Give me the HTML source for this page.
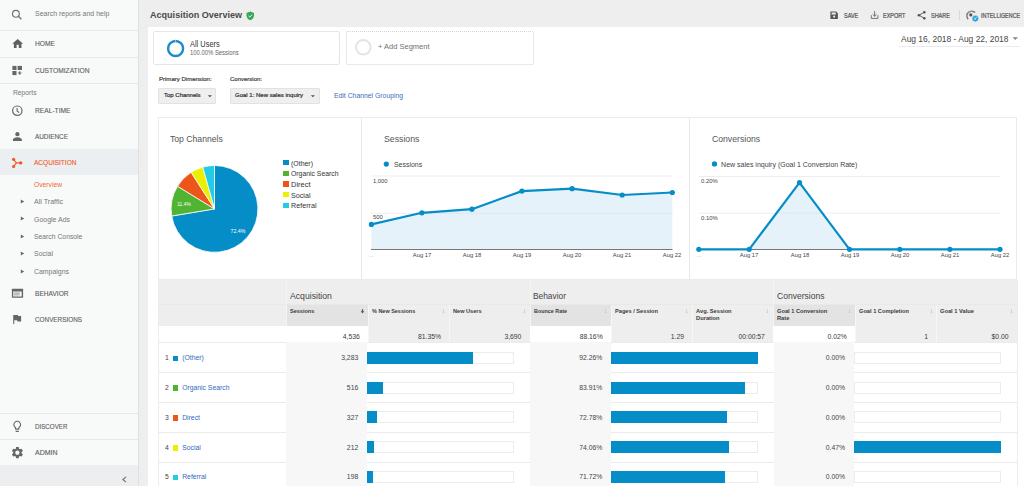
<!DOCTYPE html>
<html><head><meta charset="utf-8"><style>
html,body{margin:0;padding:0;width:1024px;height:486px;overflow:hidden;background:#fff}
body{position:relative;font-family:"Liberation Sans", sans-serif}
.t{position:absolute;white-space:nowrap;line-height:1}
.r{position:absolute}
.i{position:absolute;overflow:visible}
</style></head><body>
<div class="r" style="left:0px;top:0px;width:138px;height:486px;background:#f8f9f9;"></div>
<div class="r" style="left:138px;top:0px;width:1px;height:486px;background:#e0e0e0;"></div>
<div class="r" style="left:0px;top:30px;width:138px;height:1px;background:#e6e8ea;"></div>
<div class="r" style="left:0px;top:56.5px;width:138px;height:1px;background:#e6e8ea;"></div>
<div class="r" style="left:0px;top:83px;width:138px;height:1px;background:#e6e8ea;"></div>
<div class="r" style="left:0px;top:412.5px;width:138px;height:1px;background:#e6e8ea;"></div>
<div class="r" style="left:0px;top:438.5px;width:138px;height:1px;background:#e6e8ea;"></div>
<div class="r" style="left:0px;top:149.2px;width:138px;height:25.8px;background:#eceff1;"></div>
<div class="r" style="left:0px;top:464.5px;width:138px;height:22px;background:#eceeef;"></div>
<div id="t0" class="t" style="left:35.40px;top:10.00px;font-size:7px;color:#777;font-weight:normal;transform:scaleX(0.9944);transform-origin:left 50%;">Search reports and help</div>
<div id="t1" class="t" style="left:34.60px;top:40.00px;font-size:7px;color:#606060;font-weight:normal;transform:scaleX(0.9524);transform-origin:left 50%;-webkit-text-stroke:0.12px currentColor;">HOME</div>
<div id="t2" class="t" style="left:34.60px;top:67.00px;font-size:7px;color:#606060;font-weight:normal;transform:scaleX(0.9512);transform-origin:left 50%;-webkit-text-stroke:0.12px currentColor;">CUSTOMIZATION</div>
<div id="t3" class="t" style="left:13.20px;top:89.00px;font-size:7px;color:#777;font-weight:normal;transform:scaleX(0.9586);transform-origin:left 50%;">Reports</div>
<div id="t4" class="t" style="left:34.60px;top:107.00px;font-size:7px;color:#606060;font-weight:normal;transform:scaleX(0.9506);transform-origin:left 50%;-webkit-text-stroke:0.12px currentColor;">REAL-TIME</div>
<div id="t5" class="t" style="left:34.60px;top:133.00px;font-size:7px;color:#606060;font-weight:normal;transform:scaleX(0.9119);transform-origin:left 50%;-webkit-text-stroke:0.12px currentColor;">AUDIENCE</div>
<div id="t6" class="t" style="left:34.40px;top:159.00px;font-size:7px;color:#ee5a24;font-weight:normal;transform:scaleX(0.9337);transform-origin:left 50%;-webkit-text-stroke:0.12px currentColor;">ACQUISITION</div>
<div id="t7" class="t" style="left:34.20px;top:181.00px;font-size:7px;color:#ef6a2e;font-weight:normal;transform:scaleX(0.9593);transform-origin:left 50%;">Overview</div>
<div id="t8" class="t" style="left:34.00px;top:198.00px;font-size:7px;color:#777;font-weight:normal;transform:scaleX(1.0120);transform-origin:left 50%;">All Traffic</div>
<svg class="i" style="left:20px;top:198.90px" width="5" height="5" viewBox="0 0 5 5"><path d="M0.8 0.6 L4.2 2.5 L0.8 4.4Z" fill="#666"/></svg>
<div id="t9" class="t" style="left:34.00px;top:216.00px;font-size:7px;color:#777;font-weight:normal;transform:scaleX(0.9944);transform-origin:left 50%;">Google Ads</div>
<svg class="i" style="left:20px;top:216.40px" width="5" height="5" viewBox="0 0 5 5"><path d="M0.8 0.6 L4.2 2.5 L0.8 4.4Z" fill="#666"/></svg>
<div id="t10" class="t" style="left:34.00px;top:233.00px;font-size:7px;color:#777;font-weight:normal;transform:scaleX(0.9716);transform-origin:left 50%;">Search Console</div>
<svg class="i" style="left:20px;top:233.90px" width="5" height="5" viewBox="0 0 5 5"><path d="M0.8 0.6 L4.2 2.5 L0.8 4.4Z" fill="#666"/></svg>
<div id="t11" class="t" style="left:34.00px;top:250.00px;font-size:7px;color:#777;font-weight:normal;transform:scaleX(0.9959);transform-origin:left 50%;">Social</div>
<svg class="i" style="left:20px;top:250.80px" width="5" height="5" viewBox="0 0 5 5"><path d="M0.8 0.6 L4.2 2.5 L0.8 4.4Z" fill="#666"/></svg>
<div id="t12" class="t" style="left:34.00px;top:268.00px;font-size:7px;color:#777;font-weight:normal;transform:scaleX(0.9881);transform-origin:left 50%;">Campaigns</div>
<svg class="i" style="left:20px;top:268.50px" width="5" height="5" viewBox="0 0 5 5"><path d="M0.8 0.6 L4.2 2.5 L0.8 4.4Z" fill="#666"/></svg>
<div id="t13" class="t" style="left:34.90px;top:290.00px;font-size:7px;color:#606060;font-weight:normal;transform:scaleX(0.9395);transform-origin:left 50%;-webkit-text-stroke:0.12px currentColor;">BEHAVIOR</div>
<div id="t14" class="t" style="left:34.90px;top:316.00px;font-size:7px;color:#606060;font-weight:normal;transform:scaleX(0.9085);transform-origin:left 50%;-webkit-text-stroke:0.12px currentColor;">CONVERSIONS</div>
<div id="t15" class="t" style="left:34.90px;top:423.00px;font-size:7px;color:#606060;font-weight:normal;transform:scaleX(0.8889);transform-origin:left 50%;-webkit-text-stroke:0.12px currentColor;">DISCOVER</div>
<div id="t16" class="t" style="left:34.90px;top:449.00px;font-size:7px;color:#606060;font-weight:normal;transform:scaleX(0.9972);transform-origin:left 50%;-webkit-text-stroke:0.12px currentColor;">ADMIN</div>
<svg class="i" style="left:0;top:0" width="138" height="486" viewBox="0 0 138 486"><circle cx="15.9" cy="13.8" r="3.4" fill="none" stroke="#707070" stroke-width="1.15"/><path d="M18.4 16.3 L21.4 19.2" stroke="#707070" stroke-width="1.3"/><g transform="translate(11.2 37.3) scale(0.54)"><path d="M10 20v-6h4v6h5v-8h3L12 3 2 12h3v8z" fill="#5f5f5f"/></g><rect x="12.4" y="65.9" width="4.1" height="4.1" fill="#666"/><rect x="17.6" y="65.9" width="4.4" height="4.1" fill="#666"/><rect x="12.4" y="71" width="4.1" height="4.1" fill="#666"/><path d="M19.7 71.2v3.6M17.9 73h3.6" stroke="#666" stroke-width="1.1"/><circle cx="17.3" cy="110.7" r="4.7" fill="none" stroke="#666" stroke-width="1.2"/><path d="M17.1 107.9v3.1l2.1 1.6" fill="none" stroke="#666" stroke-width="1.1"/><circle cx="17.4" cy="134.2" r="2.1" fill="#666"/><path d="M12.9 141.1v-1.3c0-1.6 3-2.5 4.5-2.5s4.5 0.9 4.5 2.5v1.3z" fill="#666"/><g fill="#ee5a24" stroke="#ee5a24"><circle cx="13.6" cy="159.3" r="1.6" stroke="none"/><circle cx="13.6" cy="166.5" r="1.6" stroke="none"/><circle cx="20.7" cy="162.9" r="1.7" stroke="none"/><path d="M13.6 159.3 L16.4 162.9 L13.6 166.5 M16.4 162.9 H20.7" fill="none" stroke-width="1.2"/></g><rect x="11.9" y="288.7" width="11.2" height="9.1" rx="0.6" fill="#666"/><rect x="13.1" y="291.5" width="8.6" height="5" fill="#f4f4f4"/><rect x="13.5" y="292.3" width="6.2" height="3.2" fill="#bdbdbd"/><g transform="translate(10.55 312.9) scale(0.53)"><path d="M14.4 6L14 4H5v17h2v-7h5.6l.4 2h7V6z" fill="#666"/></g><g transform="translate(10.5 419.6) scale(0.56)"><path d="M9 21c0 .55.45 1 1 1h4c.55 0 1-.45 1-1v-1H9v1zm3-19C8.14 2 5 5.14 5 9c0 2.38 1.19 4.47 3 5.74V17c0 .55.45 1 1 1h6c.55 0 1-.45 1-1v-2.26c1.81-1.27 3-3.36 3-5.74 0-3.86-3.14-7-7-7zm2.85 11.1l-.85.6V16h-4v-2.3l-.85-.6C7.8 12.16 7 10.63 7 9c0-2.76 2.24-5 5-5s5 2.24 5 5c0 1.63-.8 3.16-2.15 4.1z" fill="#666"/></g><g transform="translate(10.44 445.7) scale(0.58)"><path d="M19.14 12.94c.04-.3.06-.61.06-.94 0-.32-.02-.64-.07-.94l2.03-1.58c.18-.14.23-.41.12-.61l-1.92-3.32c-.12-.22-.37-.29-.59-.22l-2.39.96c-.5-.38-1.03-.7-1.62-.94l-.36-2.54c-.04-.24-.24-.41-.48-.41h-3.84c-.24 0-.43.17-.47.41l-.36 2.54c-.59.24-1.13.57-1.62.94l-2.39-.96c-.22-.08-.47 0-.59.22L2.74 8.87c-.12.21-.08.47.12.61l2.03 1.58c-.05.3-.09.63-.09.94s.02.64.07.94l-2.03 1.58c-.18.14-.23.41-.12.61l1.92 3.32c.12.22.37.29.59.22l2.39-.96c.5.38 1.03.7 1.62.94l.36 2.54c.05.24.24.41.48.41h3.84c.24 0 .44-.17.47-.41l.36-2.54c.59-.24 1.13-.56 1.62-.94l2.39.96c.22.08.47 0 .59-.22l1.92-3.32c.12-.22.07-.47-.12-.61l-2.01-1.58zM12 15.6c-1.98 0-3.6-1.62-3.6-3.6s1.62-3.6 3.6-3.6 3.6 1.62 3.6 3.6-1.62 3.6-3.6 3.6z" fill="#666"/></g><path d="M126 476.8 L122.9 479.5 L126 482.2" fill="none" stroke="#707070" stroke-width="1.1"/></svg>
<div class="r" style="left:139px;top:0px;width:885px;height:486px;background:#eeeeee;"></div>
<div class="r" style="left:148px;top:26.5px;width:876px;height:460px;background:#ffffff;"></div>
<div id="t17" class="t" style="left:149.80px;top:10.00px;font-size:9.7px;color:#4a4a4a;font-weight:bold;transform:scaleX(0.9337);transform-origin:left 50%;">Acquisition Overview</div>
<svg class="i" style="left:246px;top:10.5px" width="8.5" height="9.5" viewBox="0 0 8.5 9.5"><path d="M4.25 0.4 L8 1.9 V4.6 C8 6.9 6.4 8.6 4.25 9.2 C2.1 8.6 0.5 6.9 0.5 4.6 V1.9Z" fill="#34a853"/><path d="M2.5 4.9 L3.8 6.1 L6.1 3.6" fill="none" stroke="#fff" stroke-width="0.9"/></svg>
<div id="t18" class="t" style="left:843.90px;top:13.00px;font-size:6.4px;color:#555;font-weight:normal;transform:scaleX(0.8626);transform-origin:left 50%;-webkit-text-stroke:0.22px currentColor;">SAVE</div>
<div id="t19" class="t" style="left:883.30px;top:13.00px;font-size:6.4px;color:#555;font-weight:normal;transform:scaleX(0.8559);transform-origin:left 50%;-webkit-text-stroke:0.22px currentColor;">EXPORT</div>
<div id="t20" class="t" style="left:931.00px;top:13.00px;font-size:6.4px;color:#555;font-weight:normal;transform:scaleX(0.8579);transform-origin:left 50%;-webkit-text-stroke:0.22px currentColor;">SHARE</div>
<div id="t21" class="t" style="left:981.00px;top:13.00px;font-size:6.4px;color:#555;font-weight:normal;transform:scaleX(0.8490);transform-origin:left 50%;-webkit-text-stroke:0.22px currentColor;">INTELLIGENCE</div>
<div class="r" style="left:959px;top:10px;width:1px;height:10px;background:#d8d8d8;"></div>
<svg class="i" style="left:820px;top:0" width="204" height="27" viewBox="820 0 204 27"><path d="M830.4 11.6h5.8l1.7 1.7v5.6h-7.5z" fill="#555"/><rect x="831.6" y="12.5" width="4.2" height="2" fill="#eee"/><circle cx="834.1" cy="16.6" r="1.1" fill="#eee"/><path d="M871.3 15.2v3.2h6.6v-3.2" fill="none" stroke="#666" stroke-width="0.9"/><path d="M874.6 11.2v5M872.7 14.3l1.9 1.9 1.9-1.9" fill="none" stroke="#666" stroke-width="0.9"/><circle cx="924.3" cy="12.3" r="1.3" fill="#555"/><circle cx="918.9" cy="15.2" r="1.3" fill="#555"/><circle cx="924.3" cy="18.2" r="1.3" fill="#555"/><path d="M924.3 12.3L918.9 15.2L924.3 18.2" fill="none" stroke="#555" stroke-width="0.9"/><path d="M975.2 12.6 A4.6 4.6 0 1 0 968.2 19.2" fill="none" stroke="#777" stroke-width="1.4"/><path d="M966.4 15.2 A4.6 3 0 0 1 974 12.4" fill="none" stroke="#999" stroke-width="0.8"/><circle cx="970.8" cy="14.9" r="1.6" fill="#555"/><circle cx="975.3" cy="18.6" r="3.3" fill="#2aa0dc" stroke="#eee" stroke-width="0.6"/><path d="M973.9 17.5 l1.1 1.2 v1.4 M976.8 17.4 l-1.8 1.3" fill="none" stroke="#fff" stroke-width="0.7"/></svg>
<div class="r" style="left:153.3px;top:31.4px;width:187px;height:33.3px;background:#fff;border:1px solid #e6e6e6;border-radius:2px;box-sizing:border-box"></div>
<svg class="i" style="left:164px;top:36.5px" width="23" height="23" viewBox="0 0 23 23"><circle cx="11.6" cy="11.5" r="7.5" fill="none" stroke="#1a8ccc" stroke-width="2.4"/><path d="M11.6 2.8V5.2" stroke="#fff" stroke-width="0.5"/></svg>
<div id="t22" class="t" style="left:190.00px;top:40.00px;font-size:8.8px;color:#333;font-weight:normal;transform:scaleX(0.8437);transform-origin:left 50%;">All Users</div>
<div id="t23" class="t" style="left:190.30px;top:50.00px;font-size:6.6px;color:#666;font-weight:normal;transform:scaleX(0.8934);transform-origin:left 50%;">100.00% Sessions</div>
<div class="r" style="left:346.1px;top:31.4px;width:187.6px;height:33.3px;background:#fff;border:1px dotted #d4d4d4;border-radius:2px;box-sizing:border-box"></div>
<svg class="i" style="left:352px;top:36.3px" width="23" height="23" viewBox="0 0 23 23"><circle cx="11.3" cy="11.3" r="7.3" fill="none" stroke="#e3e3e3" stroke-width="2"/></svg>
<div id="t24" class="t" style="left:377.70px;top:43.00px;font-size:8px;color:#707070;font-weight:normal;transform:scaleX(0.9374);transform-origin:left 50%;">+ Add Segment</div>
<div id="t25" class="t" style="left:900.70px;top:34.00px;font-size:9.9px;color:#444;font-weight:normal;transform:scaleX(0.8549);transform-origin:left 50%;">Aug 16, 2018 - Aug 22, 2018</div>
<svg class="i" style="left:1011px;top:36px" width="9" height="6" viewBox="0 0 9 6"><path d="M1.5 1.2h5.5L4.25 4z" fill="#888"/></svg>
<div class="r" style="left:899.3px;top:46px;width:121px;height:1px;background:#ebebeb;"></div>
<div id="t26" class="t" style="left:158.90px;top:76.00px;font-size:6.2px;color:#444;font-weight:normal;transform:scaleX(0.9744);transform-origin:left 50%;-webkit-text-stroke:0.22px currentColor;">Primary Dimension:</div>
<div id="t27" class="t" style="left:230.20px;top:76.00px;font-size:6.2px;color:#444;font-weight:normal;transform:scaleX(0.9688);transform-origin:left 50%;-webkit-text-stroke:0.22px currentColor;">Conversion:</div>
<div class="r" style="left:158.3px;top:87.9px;width:58px;height:16px;background:#efefef;border:1px solid #e2e2e2;box-sizing:border-box;border-radius:1px"></div>
<div id="t28" class="t" style="left:163.60px;top:92.00px;font-size:6.2px;color:#333;font-weight:normal;transform:scaleX(0.9671);transform-origin:left 50%;-webkit-text-stroke:0.22px currentColor;">Top Channels</div>
<svg class="i" style="left:206.7px;top:93.8px" width="6" height="5" viewBox="0 0 6 5"><path d="M0.8 1.3h4.2L2.9 3.3z" fill="#555"/></svg>
<div class="r" style="left:230.2px;top:87.9px;width:89.4px;height:16px;background:#efefef;border:1px solid #e2e2e2;box-sizing:border-box;border-radius:1px"></div>
<div id="t29" class="t" style="left:235.20px;top:92.00px;font-size:6.2px;color:#333;font-weight:normal;transform:scaleX(0.9707);transform-origin:left 50%;-webkit-text-stroke:0.22px currentColor;">Goal 1: New sales inquiry</div>
<svg class="i" style="left:310.4px;top:93.8px" width="6" height="5" viewBox="0 0 6 5"><path d="M0.8 1.3h4.2L2.9 3.3z" fill="#555"/></svg>
<div id="t30" class="t" style="left:333.80px;top:92.00px;font-size:7px;color:#3a6fb8;font-weight:normal;transform:scaleX(0.9756);transform-origin:left 50%;">Edit Channel Grouping</div>
<div class="r" style="left:158.2px;top:117px;width:859px;height:163px;background:#fff;border:1px solid #ebebeb;box-sizing:border-box"></div>
<div class="r" style="left:361px;top:117px;width:1px;height:163px;background:#e9e9e9;"></div>
<div class="r" style="left:688.8px;top:117px;width:1px;height:163px;background:#e9e9e9;"></div>
<div id="t31" class="t" style="left:170.30px;top:134.00px;font-size:9.5px;color:#555;font-weight:normal;transform:scaleX(0.9086);transform-origin:left 50%;">Top Channels</div>
<div id="t32" class="t" style="left:383.70px;top:134.00px;font-size:9.5px;color:#555;font-weight:normal;transform:scaleX(0.9180);transform-origin:left 50%;">Sessions</div>
<div id="t33" class="t" style="left:711.60px;top:134.00px;font-size:9.5px;color:#555;font-weight:normal;transform:scaleX(0.9108);transform-origin:left 50%;">Conversions</div>
<svg class="i" style="left:0;top:0" width="1024" height="486" viewBox="0 0 1024 486"><path d="M214.5 208.9 L214.50 165.50 A43.4 43.4 0 1 1 171.69 216.02 Z" fill="#058dc7" stroke="#fff" stroke-width="0.8" stroke-linejoin="round"/><path d="M214.5 208.9 L171.69 216.02 A43.4 43.4 0 0 1 177.50 186.22 Z" fill="#50b432" stroke="#fff" stroke-width="0.8" stroke-linejoin="round"/><path d="M214.5 208.9 L177.50 186.22 A43.4 43.4 0 0 1 191.16 172.31 Z" fill="#ed561b" stroke="#fff" stroke-width="0.8" stroke-linejoin="round"/><path d="M214.5 208.9 L191.16 172.31 A43.4 43.4 0 0 1 202.75 167.12 Z" fill="#edef00" stroke="#fff" stroke-width="0.8" stroke-linejoin="round"/><path d="M214.5 208.9 L202.75 167.12 A43.4 43.4 0 0 1 214.50 165.50 Z" fill="#24cbe5" stroke="#fff" stroke-width="0.8" stroke-linejoin="round"/></svg>
<div id="t34" class="t" style="left:-62.00px;width:600px;text-align:center;top:229.00px;font-size:5.5px;color:#fff;font-weight:normal;transform:scaleX(0.9610);transform-origin:center 50%;">72.4%</div>
<div id="t35" class="t" style="left:-116.40px;width:600px;text-align:center;top:202.00px;font-size:5.5px;color:#fff;font-weight:normal;transform:scaleX(0.8889);transform-origin:center 50%;">11.4%</div>
<div class="r" style="left:283px;top:160.0px;width:5.7px;height:5.2px;background:#058dc7;"></div>
<div id="t36" class="t" style="left:291.40px;top:160.00px;font-size:7px;color:#333;font-weight:normal;transform:scaleX(0.9922);transform-origin:left 50%;">(Other)</div>
<div class="r" style="left:283px;top:170.7px;width:5.7px;height:5.2px;background:#50b432;"></div>
<div id="t37" class="t" style="left:291.40px;top:170.00px;font-size:7px;color:#333;font-weight:normal;transform:scaleX(0.9765);transform-origin:left 50%;">Organic Search</div>
<div class="r" style="left:283px;top:181.4px;width:5.7px;height:5.2px;background:#ed561b;"></div>
<div id="t38" class="t" style="left:291.40px;top:181.00px;font-size:7px;color:#333;font-weight:normal;transform:scaleX(1.0667);transform-origin:left 50%;">Direct</div>
<div class="r" style="left:283px;top:192.1px;width:5.7px;height:5.2px;background:#edef00;"></div>
<div id="t39" class="t" style="left:291.40px;top:192.00px;font-size:7px;color:#333;font-weight:normal;transform:scaleX(1.0221);transform-origin:left 50%;">Social</div>
<div class="r" style="left:283px;top:202.8px;width:5.7px;height:5.2px;background:#24cbe5;"></div>
<div id="t40" class="t" style="left:291.40px;top:202.00px;font-size:7px;color:#333;font-weight:normal;transform:scaleX(1.0238);transform-origin:left 50%;">Referral</div>
<svg class="i" style="left:0;top:0" width="1024" height="486" viewBox="0 0 1024 486"><path d="M371 176H672.5" stroke="#eeeeee" stroke-width="1"/><defs><clipPath id="clip371"><path d="M371.4 249 L371.4 224.4 L421.9 212.8 L471.9 209.2 L521.9 191.1 L572.1 188.7 L622.2 195 L672.3 192.5 L672.3 249Z"/></clipPath></defs><path d="M371 213.3H672.5" stroke="#eeeeee" stroke-width="1"/><path d="M371.4 249 L371.4 224.4 L421.9 212.8 L471.9 209.2 L521.9 191.1 L572.1 188.7 L622.2 195 L672.3 192.5 L672.3 249Z" fill="#e6f2fa"/><path d="M371 213.3H672.5" stroke="#cfcfcf" stroke-width="0.8" stroke-dasharray="1 1.5" clip-path="url(#clip371)"/><path d="M371 249.5H672.5" stroke="#777" stroke-width="1"/><path d="M371.4 224.4 L421.9 212.8 L471.9 209.2 L521.9 191.1 L572.1 188.7 L622.2 195 L672.3 192.5" fill="none" stroke="#058dc7" stroke-width="2.2" stroke-linejoin="round"/><circle cx="371.4" cy="224.4" r="2.6" fill="#058dc7"/><circle cx="421.9" cy="212.8" r="2.6" fill="#058dc7"/><circle cx="471.9" cy="209.2" r="2.6" fill="#058dc7"/><circle cx="521.9" cy="191.1" r="2.6" fill="#058dc7"/><circle cx="572.1" cy="188.7" r="2.6" fill="#058dc7"/><circle cx="622.2" cy="195" r="2.6" fill="#058dc7"/><circle cx="672.3" cy="192.5" r="2.6" fill="#058dc7"/></svg>
<svg class="i" style="left:383px;top:161px" width="6" height="6" viewBox="0 0 6 6"><circle cx="3.3" cy="3.1" r="2.6" fill="#058dc7"/></svg>
<div id="t41" class="t" style="left:394.00px;top:161.00px;font-size:7px;color:#444;font-weight:normal;transform:scaleX(0.9892);transform-origin:left 50%;">Sessions</div>
<div id="t42" class="t" style="left:373.40px;top:179.00px;font-size:5.8px;color:#444;font-weight:normal;transform:scaleX(0.9920);transform-origin:left 50%;">1,000</div>
<div id="t43" class="t" style="left:372.80px;top:215.00px;font-size:5.8px;color:#444;font-weight:normal;transform:scaleX(1.0132);transform-origin:left 50%;">500</div>
<div id="t44" class="t" style="left:121.90px;width:600px;text-align:center;top:253.00px;font-size:5.8px;color:#444;font-weight:normal;transform:scaleX(1.0068);transform-origin:center 50%;">Aug 17</div>
<div id="t45" class="t" style="left:171.90px;width:600px;text-align:center;top:253.00px;font-size:5.8px;color:#444;font-weight:normal;transform:scaleX(1.0068);transform-origin:center 50%;">Aug 18</div>
<div id="t46" class="t" style="left:221.90px;width:600px;text-align:center;top:253.00px;font-size:5.8px;color:#444;font-weight:normal;transform:scaleX(1.0068);transform-origin:center 50%;">Aug 19</div>
<div id="t47" class="t" style="left:272.10px;width:600px;text-align:center;top:253.00px;font-size:5.8px;color:#444;font-weight:normal;transform:scaleX(1.0068);transform-origin:center 50%;">Aug 20</div>
<div id="t48" class="t" style="left:322.20px;width:600px;text-align:center;top:253.00px;font-size:5.8px;color:#444;font-weight:normal;transform:scaleX(1.0068);transform-origin:center 50%;">Aug 21</div>
<div id="t49" class="t" style="left:372.30px;width:600px;text-align:center;top:253.00px;font-size:5.8px;color:#444;font-weight:normal;transform:scaleX(1.0068);transform-origin:center 50%;">Aug 22</div>
<div id="t50" class="t" style="left:71.40px;width:600px;text-align:center;top:253.00px;font-size:5.8px;color:#aaa;font-weight:normal;">...</div>
<svg class="i" style="left:0;top:0" width="1024" height="486" viewBox="0 0 1024 486"><path d="M698.8 176.5H1000.5" stroke="#eeeeee" stroke-width="1"/><defs><clipPath id="clip698"><path d="M698.8 249.3 L698.8 249.3 L749.2 249.3 L799.5 182.6 L849.5 249.3 L899.8 249.3 L949.9 249.3 L1000 249.3 L1000 249.3Z"/></clipPath></defs><path d="M698.8 213.2H1000.5" stroke="#eeeeee" stroke-width="1"/><path d="M698.8 249.3 L698.8 249.3 L749.2 249.3 L799.5 182.6 L849.5 249.3 L899.8 249.3 L949.9 249.3 L1000 249.3 L1000 249.3Z" fill="#e6f2fa"/><path d="M698.8 213.2H1000.5" stroke="#cfcfcf" stroke-width="0.8" stroke-dasharray="1 1.5" clip-path="url(#clip698)"/><path d="M698.8 249.5H1000.5" stroke="#777" stroke-width="1"/><path d="M698.8 249.3 L749.2 249.3 L799.5 182.6 L849.5 249.3 L899.8 249.3 L949.9 249.3 L1000 249.3" fill="none" stroke="#058dc7" stroke-width="2.2" stroke-linejoin="round"/><circle cx="698.8" cy="249.3" r="2.6" fill="#058dc7"/><circle cx="749.2" cy="249.3" r="2.6" fill="#058dc7"/><circle cx="799.5" cy="182.6" r="2.6" fill="#058dc7"/><circle cx="849.5" cy="249.3" r="2.6" fill="#058dc7"/><circle cx="899.8" cy="249.3" r="2.6" fill="#058dc7"/><circle cx="949.9" cy="249.3" r="2.6" fill="#058dc7"/><circle cx="1000" cy="249.3" r="2.6" fill="#058dc7"/></svg>
<svg class="i" style="left:711px;top:161px" width="6" height="6" viewBox="0 0 6 6"><circle cx="3.5" cy="2.9" r="2.6" fill="#058dc7"/></svg>
<div id="t51" class="t" style="left:721.10px;top:161.00px;font-size:7px;color:#444;font-weight:normal;">New sales inquiry (Goal 1 Conversion Rate)</div>
<div id="t52" class="t" style="left:700.70px;top:179.00px;font-size:5.8px;color:#444;font-weight:normal;transform:scaleX(1.0160);transform-origin:left 50%;">0.20%</div>
<div id="t53" class="t" style="left:700.70px;top:216.00px;font-size:5.8px;color:#444;font-weight:normal;transform:scaleX(1.0160);transform-origin:left 50%;">0.10%</div>
<div id="t54" class="t" style="left:449.20px;width:600px;text-align:center;top:253.00px;font-size:5.8px;color:#444;font-weight:normal;transform:scaleX(1.0068);transform-origin:center 50%;">Aug 17</div>
<div id="t55" class="t" style="left:499.50px;width:600px;text-align:center;top:253.00px;font-size:5.8px;color:#444;font-weight:normal;transform:scaleX(1.0068);transform-origin:center 50%;">Aug 18</div>
<div id="t56" class="t" style="left:549.50px;width:600px;text-align:center;top:253.00px;font-size:5.8px;color:#444;font-weight:normal;transform:scaleX(1.0068);transform-origin:center 50%;">Aug 19</div>
<div id="t57" class="t" style="left:599.80px;width:600px;text-align:center;top:253.00px;font-size:5.8px;color:#444;font-weight:normal;transform:scaleX(1.0068);transform-origin:center 50%;">Aug 20</div>
<div id="t58" class="t" style="left:649.90px;width:600px;text-align:center;top:253.00px;font-size:5.8px;color:#444;font-weight:normal;transform:scaleX(1.0068);transform-origin:center 50%;">Aug 21</div>
<div id="t59" class="t" style="left:700.00px;width:600px;text-align:center;top:253.00px;font-size:5.8px;color:#444;font-weight:normal;transform:scaleX(1.0068);transform-origin:center 50%;">Aug 22</div>
<div id="t60" class="t" style="left:399.00px;width:600px;text-align:center;top:253.00px;font-size:5.8px;color:#aaa;font-weight:normal;">...</div>
<div class="r" style="left:158.2px;top:280px;width:859px;height:45.9px;background:#eeeeee;"></div>
<div class="r" style="left:286.3px;top:305px;width:82.09999999999997px;height:20.9px;background:#e3e3e3;"></div>
<div class="r" style="left:530px;top:305px;width:81.29999999999995px;height:20.9px;background:#e3e3e3;"></div>
<div class="r" style="left:773.5px;top:305px;width:81.89999999999998px;height:20.9px;background:#e3e3e3;"></div>
<div class="r" style="left:285.8px;top:280px;width:1px;height:45.9px;background:#f4f4f4;"></div>
<div class="r" style="left:529.5px;top:280px;width:1px;height:45.9px;background:#f4f4f4;"></div>
<div class="r" style="left:773.0px;top:280px;width:1px;height:45.9px;background:#f4f4f4;"></div>
<div class="r" style="left:367.9px;top:305px;width:1px;height:37.3px;background:#f6f6f6;"></div>
<div class="r" style="left:449.1px;top:305px;width:1px;height:37.3px;background:#f6f6f6;"></div>
<div class="r" style="left:610.8px;top:305px;width:1px;height:37.3px;background:#f6f6f6;"></div>
<div class="r" style="left:692.1px;top:305px;width:1px;height:37.3px;background:#f6f6f6;"></div>
<div class="r" style="left:854.9px;top:305px;width:1px;height:37.3px;background:#f6f6f6;"></div>
<div class="r" style="left:936.2px;top:305px;width:1px;height:37.3px;background:#f6f6f6;"></div>
<div class="r" style="left:158.2px;top:304.4px;width:859px;height:0.8px;background:#e9e9e9;"></div>
<div id="t61" class="t" style="left:289.60px;top:292.00px;font-size:8.7px;color:#444;font-weight:normal;transform:scaleX(0.9972);transform-origin:left 50%;">Acquisition</div>
<div id="t62" class="t" style="left:533.40px;top:292.00px;font-size:8.7px;color:#444;font-weight:normal;transform:scaleX(0.9622);transform-origin:left 50%;">Behavior</div>
<div id="t63" class="t" style="left:776.70px;top:292.00px;font-size:8.7px;color:#444;font-weight:normal;transform:scaleX(0.9835);transform-origin:left 50%;">Conversions</div>
<div id="t64" class="t" style="left:289.80px;top:309.00px;font-size:5.8px;color:#3a3a3a;font-weight:bold;transform:scaleX(0.9541);transform-origin:left 50%;">Sessions</div>
<svg class="i" style="left:359.8px;top:309px" width="5" height="5" viewBox="0 0 5 5"><path d="M2.5 0.2V3.2" stroke="#555" stroke-width="1.2"/><path d="M0.7 2.3H4.3L2.5 4.4Z" fill="#555"/></svg>
<div id="t65" class="t" style="left:371.90px;top:309.00px;font-size:5.8px;color:#3a3a3a;font-weight:bold;transform:scaleX(0.9443);transform-origin:left 50%;">% New Sessions</div>
<svg class="i" style="left:441.4px;top:309px" width="5" height="5" viewBox="0 0 5 5"><path d="M2.5 0.2V3.8M1.4 2.9L2.5 4L3.6 2.9" fill="none" stroke="#c4c4c4" stroke-width="0.6"/></svg>
<div id="t66" class="t" style="left:453.10px;top:309.00px;font-size:5.8px;color:#3a3a3a;font-weight:bold;transform:scaleX(0.9644);transform-origin:left 50%;">New Users</div>
<svg class="i" style="left:521.8px;top:309px" width="5" height="5" viewBox="0 0 5 5"><path d="M2.5 0.2V3.8M1.4 2.9L2.5 4L3.6 2.9" fill="none" stroke="#c4c4c4" stroke-width="0.6"/></svg>
<div id="t67" class="t" style="left:533.50px;top:309.00px;font-size:5.8px;color:#3a3a3a;font-weight:bold;transform:scaleX(0.9312);transform-origin:left 50%;">Bounce Rate</div>
<svg class="i" style="left:603.1px;top:309px" width="5" height="5" viewBox="0 0 5 5"><path d="M2.5 0.2V3.8M1.4 2.9L2.5 4L3.6 2.9" fill="none" stroke="#c4c4c4" stroke-width="0.6"/></svg>
<div id="t68" class="t" style="left:614.80px;top:309.00px;font-size:5.8px;color:#3a3a3a;font-weight:bold;transform:scaleX(0.9738);transform-origin:left 50%;">Pages / Session</div>
<svg class="i" style="left:684.4px;top:309px" width="5" height="5" viewBox="0 0 5 5"><path d="M2.5 0.2V3.8M1.4 2.9L2.5 4L3.6 2.9" fill="none" stroke="#c4c4c4" stroke-width="0.6"/></svg>
<div id="t69" class="t" style="left:696.10px;top:308.27px;font-size:5.7px;color:#3a3a3a;font-weight:bold;line-height:7px">Avg. Session<br>Duration</div>
<svg class="i" style="left:765.3px;top:309px" width="5" height="5" viewBox="0 0 5 5"><path d="M2.5 0.2V3.8M1.4 2.9L2.5 4L3.6 2.9" fill="none" stroke="#c4c4c4" stroke-width="0.6"/></svg>
<div id="t70" class="t" style="left:777.00px;top:308.27px;font-size:5.7px;color:#3a3a3a;font-weight:bold;line-height:7px">Goal 1 Conversion<br>Rate</div>
<svg class="i" style="left:847.2px;top:309px" width="5" height="5" viewBox="0 0 5 5"><path d="M2.5 0.2V3.8M1.4 2.9L2.5 4L3.6 2.9" fill="none" stroke="#c4c4c4" stroke-width="0.6"/></svg>
<div id="t71" class="t" style="left:858.90px;top:309.00px;font-size:5.8px;color:#3a3a3a;font-weight:bold;transform:scaleX(0.9762);transform-origin:left 50%;">Goal 1 Completion</div>
<svg class="i" style="left:928.5px;top:309px" width="5" height="5" viewBox="0 0 5 5"><path d="M2.5 0.2V3.8M1.4 2.9L2.5 4L3.6 2.9" fill="none" stroke="#c4c4c4" stroke-width="0.6"/></svg>
<div id="t72" class="t" style="left:940.20px;top:309.00px;font-size:5.8px;color:#3a3a3a;font-weight:bold;transform:scaleX(0.9860);transform-origin:left 50%;">Goal 1 Value</div>
<svg class="i" style="left:1009.0px;top:309px" width="5" height="5" viewBox="0 0 5 5"><path d="M2.5 0.2V3.8M1.4 2.9L2.5 4L3.6 2.9" fill="none" stroke="#c4c4c4" stroke-width="0.6"/></svg>
<div class="r" style="left:158.2px;top:325.9px;width:859px;height:16.5px;background:#fff;"></div>
<div class="r" style="left:368.4px;top:325.9px;width:81.20000000000005px;height:16.5px;background:#eeeeee;"></div>
<div class="r" style="left:449.6px;top:325.9px;width:80.39999999999998px;height:16.5px;background:#eeeeee;"></div>
<div class="r" style="left:611.3px;top:325.9px;width:81.30000000000007px;height:16.5px;background:#eeeeee;"></div>
<div class="r" style="left:692.6px;top:325.9px;width:80.89999999999998px;height:16.5px;background:#eeeeee;"></div>
<div class="r" style="left:855.4px;top:325.9px;width:81.30000000000007px;height:16.5px;background:#eeeeee;"></div>
<div class="r" style="left:936.7px;top:325.9px;width:80.5px;height:16.5px;background:#eeeeee;"></div>
<div class="r" style="left:367.9px;top:325.9px;width:1px;height:16.5px;background:#f6f6f6;"></div>
<div class="r" style="left:449.1px;top:325.9px;width:1px;height:16.5px;background:#f6f6f6;"></div>
<div class="r" style="left:610.8px;top:325.9px;width:1px;height:16.5px;background:#f6f6f6;"></div>
<div class="r" style="left:692.1px;top:325.9px;width:1px;height:16.5px;background:#f6f6f6;"></div>
<div class="r" style="left:854.9px;top:325.9px;width:1px;height:16.5px;background:#f6f6f6;"></div>
<div class="r" style="left:936.2px;top:325.9px;width:1px;height:16.5px;background:#f6f6f6;"></div>
<div id="t73" class="t" style="right:664.20px;top:334.00px;font-size:6.8px;color:#3a3a3a;font-weight:normal;">4,536</div>
<div id="t74" class="t" style="right:583.00px;top:334.00px;font-size:6.8px;color:#3a3a3a;font-weight:normal;">81.35%</div>
<div id="t75" class="t" style="right:502.60px;top:334.00px;font-size:6.8px;color:#3a3a3a;font-weight:normal;">3,690</div>
<div id="t76" class="t" style="right:421.30px;top:334.00px;font-size:6.8px;color:#3a3a3a;font-weight:normal;">88.16%</div>
<div id="t77" class="t" style="right:340.00px;top:334.00px;font-size:6.8px;color:#3a3a3a;font-weight:normal;">1.29</div>
<div id="t78" class="t" style="right:259.10px;top:334.00px;font-size:6.8px;color:#3a3a3a;font-weight:normal;">00:00:57</div>
<div id="t79" class="t" style="right:177.20px;top:334.00px;font-size:6.8px;color:#3a3a3a;font-weight:normal;">0.02%</div>
<div id="t80" class="t" style="right:95.90px;top:334.00px;font-size:6.8px;color:#3a3a3a;font-weight:normal;">1</div>
<div id="t81" class="t" style="right:15.40px;top:334.00px;font-size:6.8px;color:#3a3a3a;font-weight:normal;">$0.00</div>
<div class="r" style="left:158.2px;top:342.4px;width:859px;height:30px;background:#fff;"></div>
<div class="r" style="left:158.2px;top:342.4px;width:859px;height:0.8px;background:#ebebeb;"></div>
<div class="r" style="left:286.3px;top:342.4px;width:80.49999999999997px;height:30px;background:#f7f7f7;"></div>
<div class="r" style="left:530px;top:342.4px;width:81.29999999999995px;height:30px;background:#f7f7f7;"></div>
<div class="r" style="left:773.5px;top:342.4px;width:80.29999999999998px;height:30px;background:#f7f7f7;"></div>
<div id="t82" class="t" style="left:165.10px;top:355.00px;font-size:6.8px;color:#444;font-weight:normal;">1</div>
<div class="r" style="left:172.9px;top:355.59999999999997px;width:5.5px;height:5.5px;background:#058dc7;"></div>
<div id="t83" class="t" style="left:182.20px;top:355.00px;font-size:6.8px;color:#2f6ac2;font-weight:normal;">(Other)</div>
<div id="t84" class="t" style="right:665.80px;top:355.00px;font-size:6.8px;color:#444;font-weight:normal;">3,283</div>
<div id="t85" class="t" style="right:421.70px;top:355.00px;font-size:6.8px;color:#444;font-weight:normal;">92.26%</div>
<div id="t86" class="t" style="right:179.00px;top:355.00px;font-size:6.8px;color:#444;font-weight:normal;">0.00%</div>
<div class="r" style="left:366.8px;top:351.79999999999995px;width:146.8px;height:12px;background:#fff;border:1px solid #ececec;box-sizing:border-box"></div>
<div class="r" style="left:366.8px;top:351.79999999999995px;width:106.25px;height:12px;background:#058dc7;"></div>
<div class="r" style="left:610.8px;top:351.79999999999995px;width:147.1px;height:12px;background:#fff;border:1px solid #ececec;box-sizing:border-box"></div>
<div class="r" style="left:610.8px;top:351.79999999999995px;width:147.1px;height:12px;background:#058dc7;"></div>
<div class="r" style="left:854px;top:351.79999999999995px;width:146.7px;height:12px;background:#fff;border:1px solid #ececec;box-sizing:border-box"></div>
<div class="r" style="left:158.2px;top:372.2px;width:859px;height:30px;background:#fff;"></div>
<div class="r" style="left:158.2px;top:372.2px;width:859px;height:0.8px;background:#ebebeb;"></div>
<div class="r" style="left:286.3px;top:372.2px;width:80.49999999999997px;height:30px;background:#f7f7f7;"></div>
<div class="r" style="left:530px;top:372.2px;width:81.29999999999995px;height:30px;background:#f7f7f7;"></div>
<div class="r" style="left:773.5px;top:372.2px;width:80.29999999999998px;height:30px;background:#f7f7f7;"></div>
<div id="t87" class="t" style="left:165.10px;top:385.00px;font-size:6.8px;color:#444;font-weight:normal;">2</div>
<div class="r" style="left:172.9px;top:385.4px;width:5.5px;height:5.5px;background:#50b432;"></div>
<div id="t88" class="t" style="left:182.20px;top:385.00px;font-size:6.8px;color:#2f6ac2;font-weight:normal;">Organic Search</div>
<div id="t89" class="t" style="right:665.80px;top:385.00px;font-size:6.8px;color:#444;font-weight:normal;">516</div>
<div id="t90" class="t" style="right:421.70px;top:385.00px;font-size:6.8px;color:#444;font-weight:normal;">83.91%</div>
<div id="t91" class="t" style="right:179.00px;top:385.00px;font-size:6.8px;color:#444;font-weight:normal;">0.00%</div>
<div class="r" style="left:366.8px;top:381.59999999999997px;width:146.8px;height:12px;background:#fff;border:1px solid #ececec;box-sizing:border-box"></div>
<div class="r" style="left:366.8px;top:381.59999999999997px;width:16.7px;height:12px;background:#058dc7;"></div>
<div class="r" style="left:610.8px;top:381.59999999999997px;width:147.1px;height:12px;background:#fff;border:1px solid #ececec;box-sizing:border-box"></div>
<div class="r" style="left:610.8px;top:381.59999999999997px;width:133.79px;height:12px;background:#058dc7;"></div>
<div class="r" style="left:854px;top:381.59999999999997px;width:146.7px;height:12px;background:#fff;border:1px solid #ececec;box-sizing:border-box"></div>
<div class="r" style="left:158.2px;top:402.0px;width:859px;height:30px;background:#fff;"></div>
<div class="r" style="left:158.2px;top:402.0px;width:859px;height:0.8px;background:#ebebeb;"></div>
<div class="r" style="left:286.3px;top:402.0px;width:80.49999999999997px;height:30px;background:#f7f7f7;"></div>
<div class="r" style="left:530px;top:402.0px;width:81.29999999999995px;height:30px;background:#f7f7f7;"></div>
<div class="r" style="left:773.5px;top:402.0px;width:80.29999999999998px;height:30px;background:#f7f7f7;"></div>
<div id="t92" class="t" style="left:165.10px;top:415.00px;font-size:6.8px;color:#444;font-weight:normal;">3</div>
<div class="r" style="left:172.9px;top:415.2px;width:5.5px;height:5.5px;background:#ed561b;"></div>
<div id="t93" class="t" style="left:182.20px;top:415.00px;font-size:6.8px;color:#2f6ac2;font-weight:normal;">Direct</div>
<div id="t94" class="t" style="right:665.80px;top:415.00px;font-size:6.8px;color:#444;font-weight:normal;">327</div>
<div id="t95" class="t" style="right:421.70px;top:415.00px;font-size:6.8px;color:#444;font-weight:normal;">72.78%</div>
<div id="t96" class="t" style="right:179.00px;top:415.00px;font-size:6.8px;color:#444;font-weight:normal;">0.00%</div>
<div class="r" style="left:366.8px;top:411.4px;width:146.8px;height:12px;background:#fff;border:1px solid #ececec;box-sizing:border-box"></div>
<div class="r" style="left:366.8px;top:411.4px;width:10.58px;height:12px;background:#058dc7;"></div>
<div class="r" style="left:610.8px;top:411.4px;width:147.1px;height:12px;background:#fff;border:1px solid #ececec;box-sizing:border-box"></div>
<div class="r" style="left:610.8px;top:411.4px;width:116.04px;height:12px;background:#058dc7;"></div>
<div class="r" style="left:854px;top:411.4px;width:146.7px;height:12px;background:#fff;border:1px solid #ececec;box-sizing:border-box"></div>
<div class="r" style="left:158.2px;top:431.79999999999995px;width:859px;height:30px;background:#fff;"></div>
<div class="r" style="left:158.2px;top:431.79999999999995px;width:859px;height:0.8px;background:#ebebeb;"></div>
<div class="r" style="left:286.3px;top:431.79999999999995px;width:80.49999999999997px;height:30px;background:#f7f7f7;"></div>
<div class="r" style="left:530px;top:431.79999999999995px;width:81.29999999999995px;height:30px;background:#f7f7f7;"></div>
<div class="r" style="left:773.5px;top:431.79999999999995px;width:80.29999999999998px;height:30px;background:#f7f7f7;"></div>
<div id="t97" class="t" style="left:165.10px;top:445.00px;font-size:6.8px;color:#444;font-weight:normal;">4</div>
<div class="r" style="left:172.9px;top:444.99999999999994px;width:5.5px;height:5.5px;background:#edef00;"></div>
<div id="t98" class="t" style="left:182.20px;top:445.00px;font-size:6.8px;color:#2f6ac2;font-weight:normal;">Social</div>
<div id="t99" class="t" style="right:665.80px;top:445.00px;font-size:6.8px;color:#444;font-weight:normal;">212</div>
<div id="t100" class="t" style="right:421.70px;top:445.00px;font-size:6.8px;color:#444;font-weight:normal;">74.06%</div>
<div id="t101" class="t" style="right:179.00px;top:445.00px;font-size:6.8px;color:#444;font-weight:normal;">0.47%</div>
<div class="r" style="left:366.8px;top:441.19999999999993px;width:146.8px;height:12px;background:#fff;border:1px solid #ececec;box-sizing:border-box"></div>
<div class="r" style="left:366.8px;top:441.19999999999993px;width:6.86px;height:12px;background:#058dc7;"></div>
<div class="r" style="left:610.8px;top:441.19999999999993px;width:147.1px;height:12px;background:#fff;border:1px solid #ececec;box-sizing:border-box"></div>
<div class="r" style="left:610.8px;top:441.19999999999993px;width:118.08px;height:12px;background:#058dc7;"></div>
<div class="r" style="left:854px;top:441.19999999999993px;width:146.7px;height:12px;background:#fff;border:1px solid #ececec;box-sizing:border-box"></div>
<div class="r" style="left:854px;top:441.19999999999993px;width:146.69999999999996px;height:12px;background:#058dc7;"></div>
<div class="r" style="left:158.2px;top:461.59999999999997px;width:859px;height:30px;background:#fff;"></div>
<div class="r" style="left:158.2px;top:461.59999999999997px;width:859px;height:0.8px;background:#ebebeb;"></div>
<div class="r" style="left:286.3px;top:461.59999999999997px;width:80.49999999999997px;height:30px;background:#f7f7f7;"></div>
<div class="r" style="left:530px;top:461.59999999999997px;width:81.29999999999995px;height:30px;background:#f7f7f7;"></div>
<div class="r" style="left:773.5px;top:461.59999999999997px;width:80.29999999999998px;height:30px;background:#f7f7f7;"></div>
<div id="t102" class="t" style="left:165.10px;top:474.00px;font-size:6.8px;color:#444;font-weight:normal;">5</div>
<div class="r" style="left:172.9px;top:474.79999999999995px;width:5.5px;height:5.5px;background:#24cbe5;"></div>
<div id="t103" class="t" style="left:182.20px;top:474.00px;font-size:6.8px;color:#2f6ac2;font-weight:normal;">Referral</div>
<div id="t104" class="t" style="right:665.80px;top:474.00px;font-size:6.8px;color:#444;font-weight:normal;">198</div>
<div id="t105" class="t" style="right:421.70px;top:474.00px;font-size:6.8px;color:#444;font-weight:normal;">71.72%</div>
<div id="t106" class="t" style="right:179.00px;top:474.00px;font-size:6.8px;color:#444;font-weight:normal;">0.00%</div>
<div class="r" style="left:366.8px;top:470.99999999999994px;width:146.8px;height:12px;background:#fff;border:1px solid #ececec;box-sizing:border-box"></div>
<div class="r" style="left:366.8px;top:470.99999999999994px;width:6.41px;height:12px;background:#058dc7;"></div>
<div class="r" style="left:610.8px;top:470.99999999999994px;width:147.1px;height:12px;background:#fff;border:1px solid #ececec;box-sizing:border-box"></div>
<div class="r" style="left:610.8px;top:470.99999999999994px;width:114.35px;height:12px;background:#058dc7;"></div>
<div class="r" style="left:854px;top:470.99999999999994px;width:146.7px;height:12px;background:#fff;border:1px solid #ececec;box-sizing:border-box"></div>
<div class="r" style="left:1017.2px;top:280px;width:1px;height:206px;background:#ececec;"></div>
<div class="r" style="left:158.2px;top:280px;width:1px;height:206px;background:#ececec;"></div>
</body></html>
